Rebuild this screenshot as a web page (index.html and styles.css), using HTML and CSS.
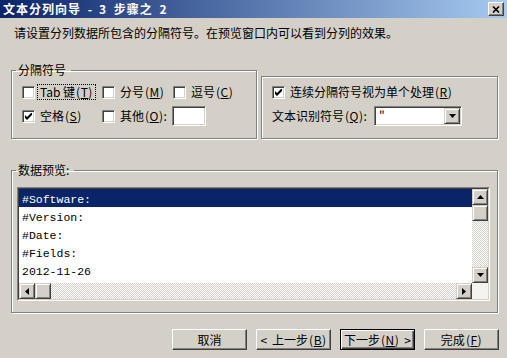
FILE: index.html
```html
<!DOCTYPE html>
<html lang="zh-CN">
<head>
  <meta charset="UTF-8">
  <title>文本分列向导 - 3 步骤之 2</title>
  <link rel="stylesheet" href="styles.css">
</head>
<body>
  <div class="window">
    <!-- title bar -->
    <div class="titlebar">
      <span class="title">文本分列向导 <span class="lat">- 3</span> 步骤之 <span class="lat">2</span></span>
      <span class="close raised">
        <svg width="8" height="7" viewBox="0 0 8 7"><path d="M1 0.5 L7 6.5 M7 0.5 L1 6.5" stroke="#000" stroke-width="1.6" fill="none"/></svg>
      </span>
    </div>

    <div class="body">
      <p class="intro">请设置分列数据所包含的分隔符号。在预览窗口内可以看到分列的效果。</p>

      <div class="groups">
        <!-- delimiters -->
        <fieldset class="group sep">
          <legend>分隔符号</legend>
          <div class="fs-body">
            <div class="row">
              <div class="opt w80"><span class="check"></span><span class="txt focus">Tab 键<span class="k">(<u>T</u>)</span></span></div>
              <div class="opt w71"><span class="check"></span><span class="txt">分号<span class="k">(<u>M</u>)</span></span></div>
              <div class="opt"><span class="check"></span><span class="txt">逗号<span class="k">(<u>C</u>)</span></span></div>
            </div>
            <div class="row">
              <div class="opt w80"><span class="check on"><svg width="7" height="7" viewBox="0 0 7 7"><polygon points="0,2 2,4 7,-1 7,2 2,7 0,5" fill="#000"/></svg></span><span class="txt">空格<span class="k">(<u>S</u>)</span></span></div>
              <div class="opt"><span class="check"></span><span class="txt">其他<span class="k">(<u>O</u>):</span></span></div>
              <span class="edit"></span>
            </div>
          </div>
        </fieldset>

        <!-- options -->
        <div class="group opts">
          <div class="row">
            <div class="opt"><span class="check on"><svg width="7" height="7" viewBox="0 0 7 7"><polygon points="0,2 2,4 7,-1 7,2 2,7 0,5" fill="#000"/></svg></span><span class="txt">连续分隔符号视为单个处理<span class="k">(<u>R</u>)</span></span></div>
          </div>
          <div class="row">
            <span class="qlabel">文本识别符号<span class="k">(<u>Q</u>):</span></span>
            <span class="combo">
              <span class="combo-val">"</span>
              <span class="sbtn raised"><svg width="7" height="4" viewBox="0 0 7 4"><polygon points="0,0 7,0 3.5,4" fill="#000"/></svg></span>
            </span>
          </div>
        </div>
      </div>

      <!-- preview -->
      <fieldset class="group preview">
        <legend>数据预览:</legend>
        <div class="fs-body pv">
          <div class="listbox">
            <div class="listbox-in">
              <div class="rows">
                <div class="sel">#Software:</div>
                <div>#Version:</div>
                <div>#Date:</div>
                <div>#Fields:</div>
                <div>2012-11-26</div>
              </div>
              <div class="vscroll">
                <span class="sbtn raised"><svg width="7" height="4" viewBox="0 0 7 4"><polygon points="0,4 7,4 3.5,0" fill="#000"/></svg></span>
                <span class="sbtn raised"></span>
                <span class="track"></span>
                <span class="sbtn raised"><svg width="7" height="4" viewBox="0 0 7 4"><polygon points="0,0 7,0 3.5,4" fill="#000"/></svg></span>
              </div>
              <div class="hscroll">
                <span class="sbtn raised"><svg width="4" height="7" viewBox="0 0 4 7"><polygon points="4,0 4,7 0,3.5" fill="#000"/></svg></span>
                <span class="sbtn raised"></span>
                <span class="track"></span>
                <span class="sbtn raised"><svg width="4" height="7" viewBox="0 0 4 7"><polygon points="0,0 0,7 4,3.5" fill="#000"/></svg></span>
              </div>
              <div class="corner"></div>
            </div>
          </div>
        </div>
      </fieldset>

      <!-- wizard buttons -->
      <div class="buttons">
        <span class="btn raised">取消</span>
        <span class="btn raised"><span class="arr">&lt;</span>上一步<span class="k">(<u>B</u>)</span></span>
        <span class="btn default">下一步<span class="k">(<u>N</u>)</span><span class="arr r">&gt;</span></span>
        <span class="btn raised">完成<span class="k">(<u>F</u>)</span></span>
      </div>
    </div>
  </div>
</body>
</html>
```

FILE: styles.css
```css
/* classic Windows dialog, grey button face */
* {
  box-sizing: border-box;
}
html, body {
  margin: 0;
}
body {
  font: 12px/14px "Noto Sans CJK SC", "Liberation Sans", sans-serif;
  color: #000;
  background: #d4d0c8;
}
.window {
  width: 507px;
  height: 358px;
  background: #d4d0c8;
  overflow: hidden;
}

/* half-width latin bits, spaced like the bitmap font */
.lat {
  letter-spacing: 1px;
  word-spacing: 2px;
}
.k {
  letter-spacing: 0.5px;
  margin-left: 1px;
}
.arr {
  margin-right: 5px;
}
.arr.r {
  margin: 0 0 0 5px;
}

/* 3D edges */
.raised {
  background: #d4d0c8;
  border: 1px solid;
  border-color: #fff #404040 #404040 #fff;
  box-shadow: inset -1px -1px #808080;
}
.group {
  border: 1px solid #808080;
  box-shadow: inset 1px 1px #fff, 1px 1px #fff;
  margin: 0;
  padding: 0;
  min-width: 0;
}
legend {
  padding: 0 5px 0 2px;
  margin-left: 4px;
  line-height: 14px;
}

/* title bar */
.titlebar {
  height: 18px;
  display: flex;
  align-items: center;
  justify-content: space-between;
  padding: 0 3px;
  background: linear-gradient(to right, #0a246a, #a6caf0);
}
.title {
  color: #fff;
  font-weight: bold;
  letter-spacing: 1px;
  word-spacing: 3px;
}
.close {
  width: 16px;
  height: 14px;
  display: flex;
  align-items: center;
  justify-content: center;
}

.body {
  padding: 8px 9px 0 11px;
}
.intro {
  margin: 0 0 0 3px;
  height: 14px;
  white-space: nowrap;
}

/* top groups */
.groups {
  display: flex;
  gap: 4px;
  margin-top: 23px;
  height: 76px;
}
.sep {
  width: 246px;
  height: 76px;
}
.fs-body {
  padding: 5px 0 0 10px;
}
.opts {
  flex: 1;
  margin-top: 13px;
  padding: 5px 0 0 10px;
}
.row {
  display: flex;
  align-items: center;
  height: 20px;
}
.row + .row {
  margin-top: 4px;
}
.opt {
  display: flex;
  align-items: center;
  gap: 3px;
}
.w80 {
  width: 80px;
}
.w71 {
  width: 71px;
}
.txt {
  padding: 0 2px;
  line-height: 14px;
  white-space: nowrap;
}
.focus {
  outline: 1px dotted #000;
}

.check {
  width: 13px;
  height: 13px;
  flex: none;
  background: #fff;
  border: 1px solid;
  border-color: #808080 #fff #fff #808080;
  box-shadow: inset 1px 1px #404040, inset -1px -1px #d4d0c8;
  display: flex;
  align-items: center;
  justify-content: center;
}
.edit {
  width: 34px;
  height: 20px;
  margin-left: 3px;
  background: #fff;
  border: 1px solid;
  border-color: #808080 #fff #fff #808080;
  box-shadow: inset 1px 1px #404040, inset -1px -1px #d4d0c8;
}

.qlabel {
  width: 102px;
  white-space: nowrap;
}
.combo {
  width: 88px;
  height: 20px;
  display: flex;
  justify-content: space-between;
  background: #fff;
  border: 1px solid;
  border-color: #808080 #fff #fff #808080;
  padding: 1px;
  box-shadow: inset 1px 1px #404040, inset -1px -1px #d4d0c8;
}
.combo-val {
  padding: 1px 0 0 3px;
}

/* preview */
.preview {
  margin-top: 24px;
  height: 150px;
}
.pv {
  padding: 10px 0 0 5px;
}
.listbox {
  width: 473px;
  height: 114px;
  border: 1px solid;
  border-color: #808080 #fff #fff #808080;
}
.listbox-in {
  height: 100%;
  border: 1px solid;
  border-color: #404040 #d4d0c8 #d4d0c8 #404040;
  background: #fff;
  display: grid;
  grid-template-columns: 1fr 16px;
  grid-template-rows: 1fr 16px;
}
.rows {
  overflow: hidden;
  font: 11.5px/18px "Liberation Mono", monospace;
}
.rows div {
  height: 18px;
  line-height: 22px;
  padding-left: 3px;
  overflow: visible;
}
.rows .sel {
  background: #0a246a;
  color: #fff;
}
.vscroll {
  display: flex;
  flex-direction: column;
}
.hscroll {
  display: flex;
}
.sbtn {
  width: 16px;
  height: 16px;
  flex: none;
  display: flex;
  align-items: center;
  justify-content: center;
  border-color: #d4d0c8 #404040 #404040 #d4d0c8;
  box-shadow: inset 1px 1px #fff, inset -1px -1px #808080;
}
.track {
  flex: 1;
  background: repeating-conic-gradient(#d4d0c8 0% 25%, #fff 0% 50%) 0 0 / 2px 2px;
}
.corner {
  background: #f4f3f0;
}

/* wizard buttons */
.buttons {
  display: flex;
  justify-content: flex-end;
  gap: 9px;
  margin-top: 16px;
  margin-right: -1px;
}
.btn {
  width: 75px;
  height: 21px;
  display: flex;
  align-items: center;
  justify-content: center;
  white-space: nowrap;
}
.btn.default {
  background: #d4d0c8;
  border: 1px solid #000;
  box-shadow: inset 1px 1px #fff, inset -1px -1px #404040, inset -2px -2px #808080;
}
```
